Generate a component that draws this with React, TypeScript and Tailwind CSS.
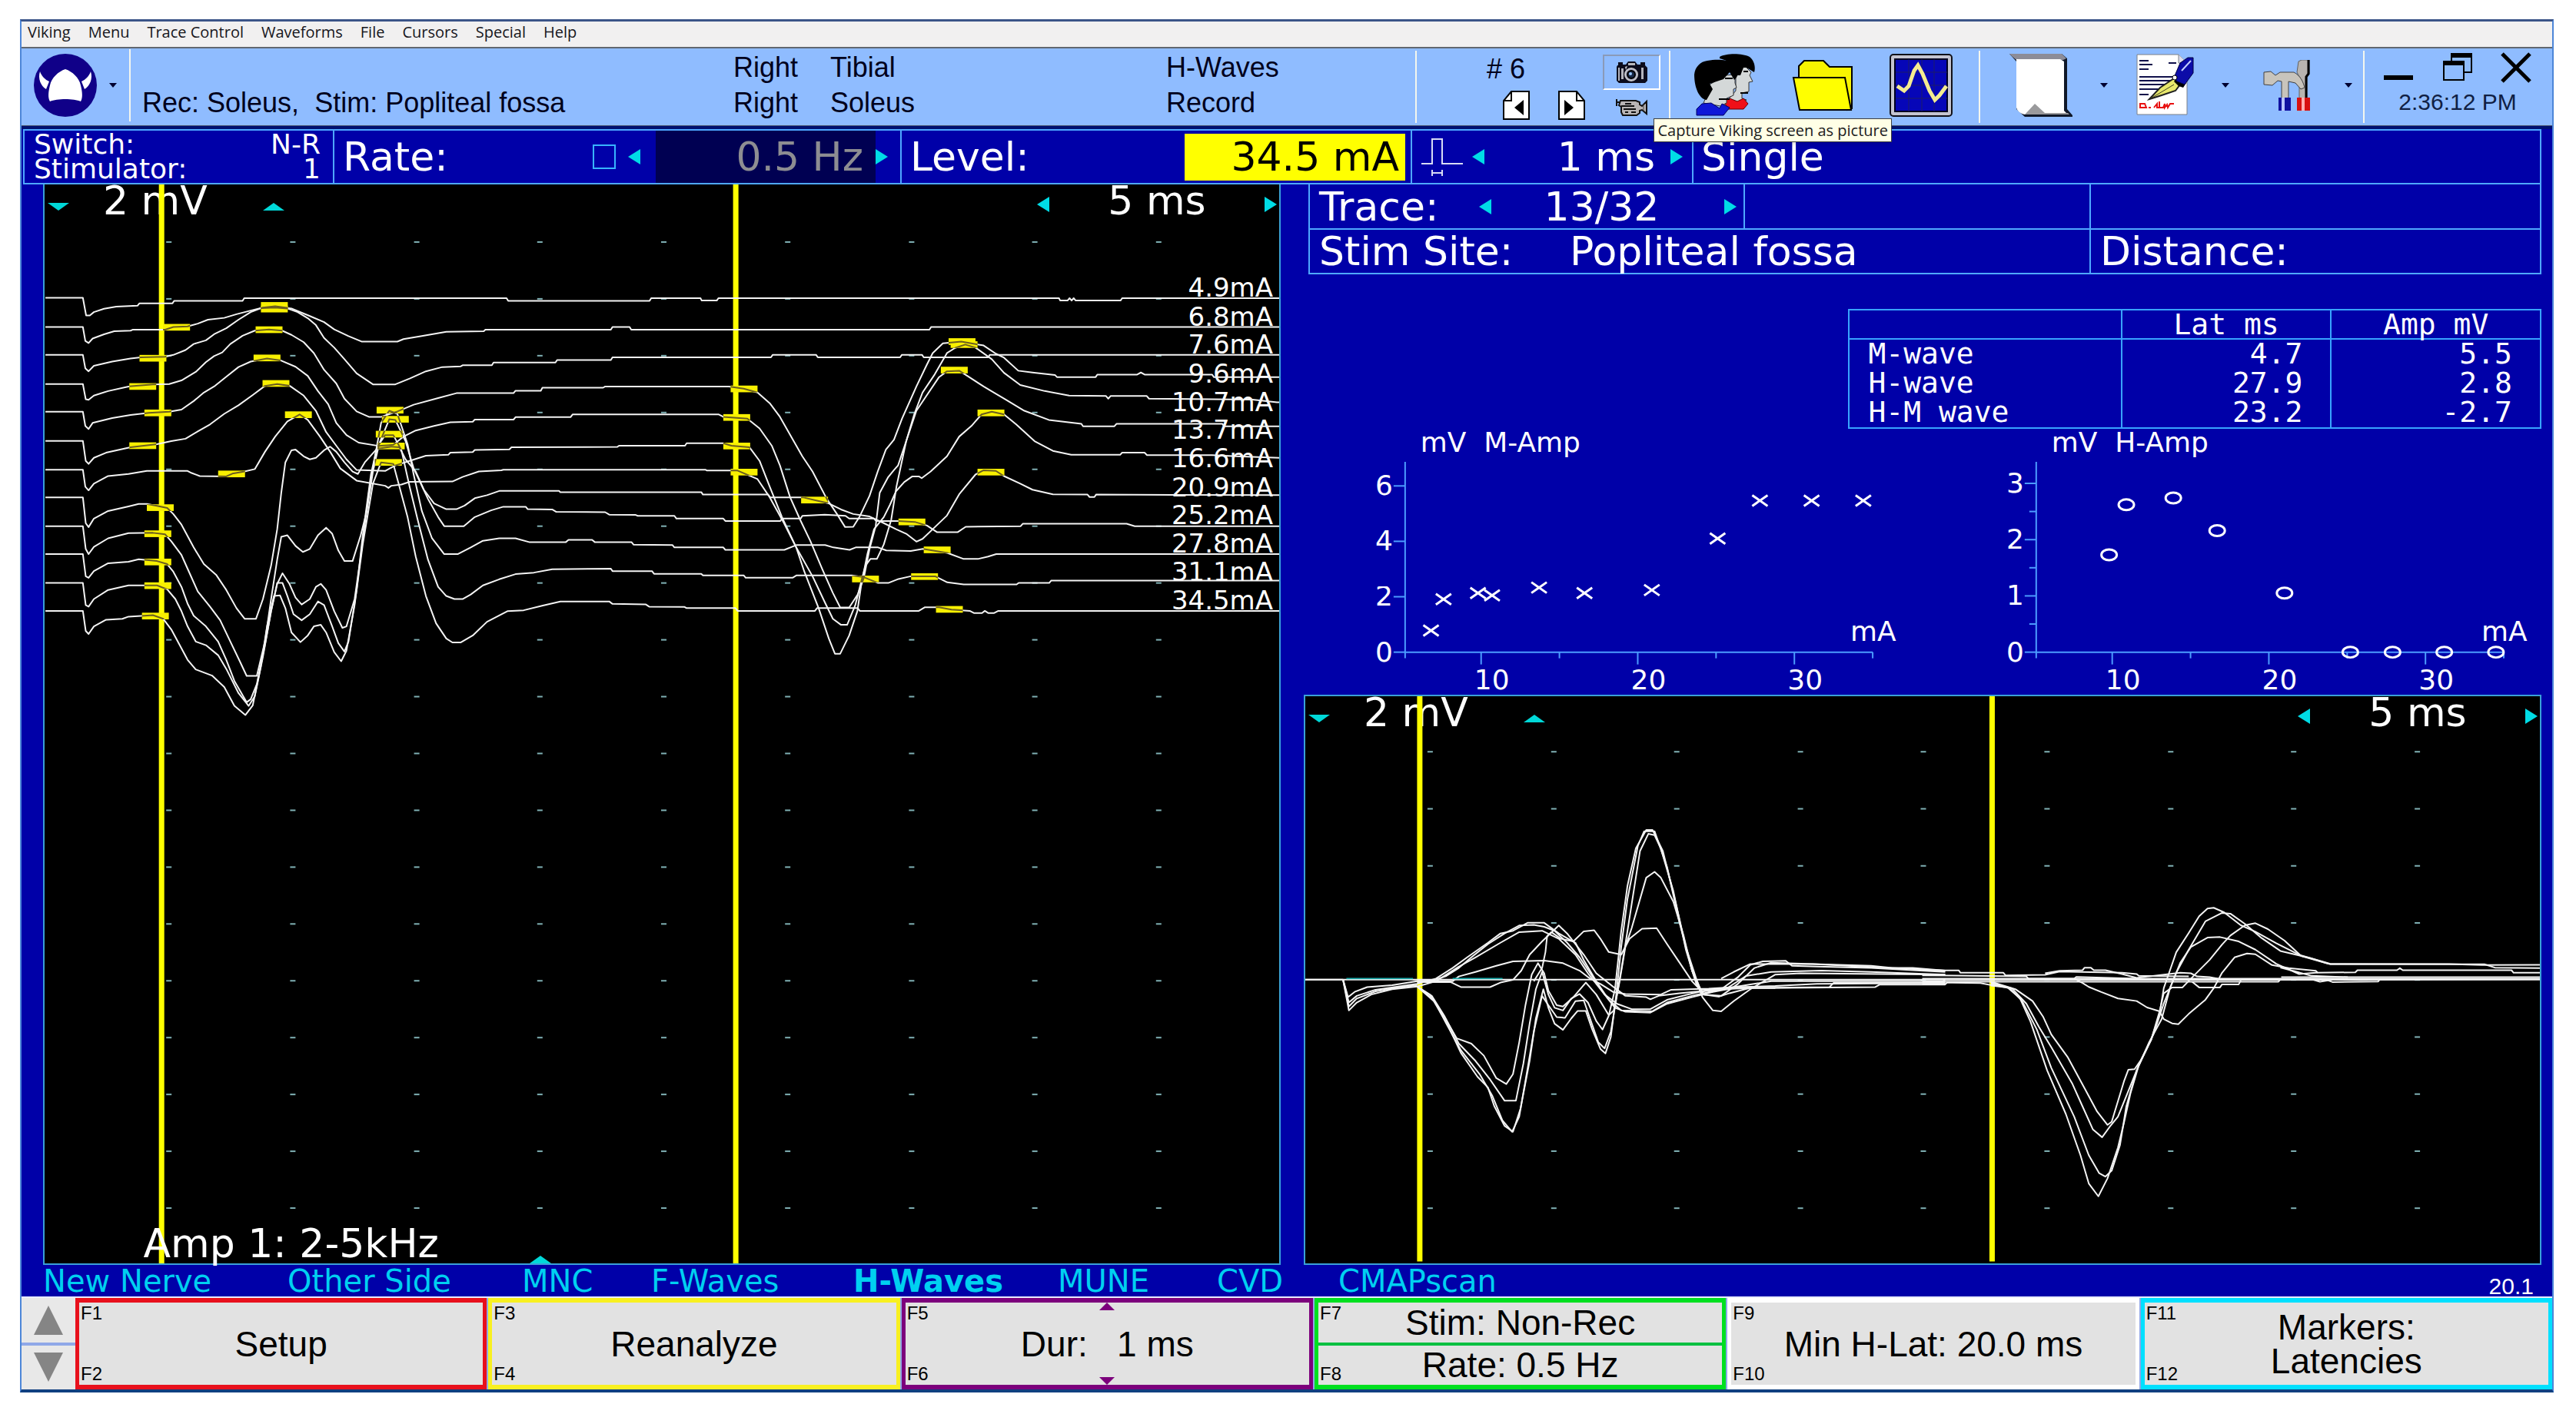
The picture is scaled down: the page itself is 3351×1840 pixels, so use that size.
import React from "react";

const WIDE = "font-['DejaVu_Sans',sans-serif]";

/* ---------- small shared pieces ---------- */

const arrowShapes = {
  left: "M16 0V20L0 10Z",
  right: "M0 0V20L16 10Z",
};

function SideArrow({ dir, label }: { dir: "left" | "right"; label: string }) {
  return (
    <button type="button" aria-label={label} className="block shrink-0">
      <svg viewBox="0 0 16 20" className="block h-5 w-4" fill="#00dce6">
        <path d={arrowShapes[dir]} />
      </svg>
    </button>
  );
}

function VertArrow({ dir, label }: { dir: "up" | "down"; label: string }) {
  return (
    <button type="button" aria-label={label} className="block shrink-0">
      <svg viewBox="0 0 28 10" className="block h-[10px] w-7" fill="#00d8d8">
        <path d={dir === "up" ? "M0 10H28L14 0Z" : "M0 0H28L14 10Z"} />
      </svg>
    </button>
  );
}

function Divider() {
  return <div className="h-[94px] w-[2px] shrink-0 self-center bg-[#f4f6ee]" />;
}

function DropArrow({ label }: { label: string }) {
  return (
    <button type="button" aria-label={label} className="shrink-0">
      <svg viewBox="0 0 10 6" className="block h-[6px] w-[10px]" fill="#000030">
        <path d="M0 0H10L5 6Z" />
      </svg>
    </button>
  );
}

/* ---------- toolbar icons ---------- */

function VikingLogo() {
  return (
    <svg viewBox="0 0 82 82" className="block h-[82px] w-[82px]">
      <circle cx="41" cy="41" r="41" fill="#100088" />
      <path
        d="M41 20C50 23 59 31 61 41C63 49 64 57 61 62C52 58 30 58 21 62C18 57 19 49 21 41C23 31 32 23 41 20Z"
        fill="#fff"
      />
      <path d="M8 23C10 29 15 34 20 36L16 46C9 42 5 32 8 23ZM74 23C72 29 67 34 62 36L66 46C73 42 77 32 74 23Z" fill="#fff" />
    </svg>
  );
}

function CameraIcon() {
  return (
    <svg viewBox="0 0 42 30" className="block h-[30px] w-[42px]">
      <path d="M2 6H3V2H9V5H13L16 1H25L28 5H32V2H38V6L41 9V26L38 29H4L1 26V8Z" fill="#0c0c1c" />
      <path d="M3 9H5V26H3ZM7 10H10V24H7ZM33 9H36V24H33Z" fill="#b4b4bc" />
      <path d="M16 3H25V6H16Z" fill="#b8b8bc" />
      <path d="M12 8L15 7L13 12Z" fill="#c8c8cc" />
      <circle cx="20" cy="18" r="8" fill="#a8a8c4" stroke="#c4c4c8" strokeWidth="2" />
      <circle cx="20" cy="18" r="5" fill="#182848" stroke="#000" strokeWidth="2" />
      <circle cx="19" cy="17" r="2" fill="#9ac8ff" />
    </svg>
  );
}

function VideoIcon() {
  return (
    <svg viewBox="0 0 42 24" className="block h-6 w-[42px]">
      <path d="M6 3H26L31 5V8L34 10L40 4V20L34 15L31 16V19L27 22H9L7 18V11L4 9Z" fill="#b9b5b5" stroke="#111" strokeWidth="2" />
      <path d="M1 1V10M1 5H6" stroke="#111" strokeWidth="2" />
      <path d="M7 10H24M12 7H20M10 14H26M12 18H16M20 18H26" stroke="#111" strokeWidth="2" />
      <path d="M36 8V16" stroke="#444" strokeWidth="1" />
    </svg>
  );
}

function PageIcon({ dir }: { dir: "left" | "right" }) {
  return (
    <svg viewBox="0 0 35 38" className="block h-[38px] w-[35px]">
      {dir === "left" ? (
        <>
          <path d="M11 1H34V37H1V13Z" fill="#fff" stroke="#000" strokeWidth="2" />
          <path d="M11 1V13H1" fill="none" stroke="#000" strokeWidth="2" />
          <path d="M27 12V32L15 22Z" fill="#000" />
        </>
      ) : (
        <>
          <path d="M1 1H24L34 13V37H1Z" fill="#fff" stroke="#000" strokeWidth="2" />
          <path d="M24 1V13H34" fill="none" stroke="#000" strokeWidth="2" />
          <path d="M8 12V32L20 22Z" fill="#000" />
        </>
      )}
    </svg>
  );
}

function PeopleIcon() {
  return (
    <svg viewBox="0 0 82 82" className="block h-[82px] w-[82px]">
      <path d="M52 18L64 14L74 24L72 28L76 36L71 37V49L62 51V58L68 60L60 66L44 60L54 48V30Z" fill="#d4d8d8" stroke="#333" strokeWidth="1" />
      <path d="M33 4C42 -1 62 -1 72 4C78 9 80 17 78 24L68 18H64L60 28H56C56 18 46 9 33 6Z" fill="#000" />
      <path d="M64 23H70M60 51H70" stroke="#000" strokeWidth="2" />
      <path d="M38 61L46 58L56 62L64 58L70 65L64 72H44Z" fill="#f01018" stroke="#600" strokeWidth="1" />
      <path d="M40 28L53 27V38L55 44L51 46V54L42 58V64L34 68L12 64L18 50L20 40Z" fill="#d4d8d8" stroke="#333" strokeWidth="1" />
      <path d="M17 9C38 5 58 11 58 20C58 26 55 32 52 34L46 24L38 33L20 39L24 46L16 60C7 59 0 45 0 27C1 17 8 10 17 9Z" fill="#000" />
      <path d="M40 32H50M32 59H46" stroke="#000" strokeWidth="2" />
      <path d="M3 72L10 65L22 64L33 71L36 65L46 70L38 80H3Z" fill="#1018d8" stroke="#000060" strokeWidth="1" />
    </svg>
  );
}

function FolderIcon() {
  return (
    <svg viewBox="0 0 82 68" className="block h-[68px] w-[82px]">
      <path d="M9 26V9L16 2H41L49 10H78V64L72 66L68 24Z" fill="#f8f400" stroke="#000" strokeWidth="2" />
      <path d="M2 24H69L77 66H10Z" fill="#ffff00" stroke="#000" strokeWidth="2" />
    </svg>
  );
}

function ScopeIcon() {
  return (
    <svg viewBox="0 0 82 82" className="block h-[82px] w-[82px]">
      <rect x="1" y="1" width="80" height="80" rx="4" fill="#c4c4d0" stroke="#101018" strokeWidth="2" />
      <rect x="7" y="7" width="68" height="68" fill="#0606b8" stroke="#000020" strokeWidth="2" />
      <path d="M8 24H75M8 41H75M8 58H75M25 7V75M42 7V75M58 7V75" stroke="#1c1c68" strokeWidth="1" />
      <path d="M10 42L19 48L25 42L32 22L37 15L43 26L52 48L59 60L65 54L74 42" fill="none" stroke="#f4ec90" strokeWidth="5" />
    </svg>
  );
}

function ScrollIcon() {
  return (
    <svg viewBox="0 0 82 82" className="block h-[82px] w-[82px]">
      <path d="M0 0H68L75 6V72L82 80V82H20L9 72V10Z" fill="#101828" />
      <path d="M0 0H68L74 6L70 8H9L4 4Z" fill="#8c8c98" />
      <path d="M9 7H66L71 10V74L76 79H20C14 78 10 74 9 70Z" fill="#fff" />
      <path d="M20 79L33 65L46 77L76 77L78 79Z" fill="#9a9a9c" />
    </svg>
  );
}

function ReportIcon() {
  return (
    <svg viewBox="0 0 76 82" className="block h-[82px] w-[76px]">
      <path d="M2 1H56L67 12V79H2Z" fill="#fff" stroke="#7a8088" strokeWidth="1" />
      <path d="M56 1V12H67" fill="#dde" stroke="#7a8088" strokeWidth="1" />
      <path d="M5 9H17M5 14H22M5 20H17M5 30H48M5 35H46M5 40H38M5 46H30M5 53H17M43 12H53" stroke="#10104a" strokeWidth="2" />
      <path d="M18 59L32 44L50 32L58 40L52 48L34 54Z" fill="#e8e86c" stroke="#202020" strokeWidth="2" />
      <path d="M20 58L50 40" stroke="#404020" strokeWidth="1" />
      <path d="M52 34L66 38L62 44L56 42L50 36Z" fill="#000" />
      <path d="M50 31L58 12L68 5H75V25L64 40L54 36Z" fill="#0c0ca8" stroke="#000040" strokeWidth="1" />
      <path d="M60 22L72 9" stroke="#c4d0ff" strokeWidth="2" />
      <circle cx="51" cy="31" r="3" fill="#fff" stroke="#000" />
      <path d="M6 70V65H12L14 70H5M17 70H20M24 70L28 65V70H31V62V70H36L38 65V70L41 66L42 70L45 65H50" fill="none" stroke="#e81010" strokeWidth="2" />
    </svg>
  );
}

function ToolsIcon() {
  return (
    <svg viewBox="0 0 62 66" className="block h-[66px] w-[62px]">
      <path d="M46 2L50 0H60V18L57 22V50H47V22L44 16Z" fill="#b8b4b0" stroke="#606060" strokeWidth="1" />
      <path d="M59 0V18L56 22V50" fill="none" stroke="#000" strokeWidth="3" />
      <path d="M1 16L10 15L16 20L22 16H40C48 20 52 28 54 36L49 38L42 30L33 28V50H24V28L19 27L12 33L1 32Z" fill="#c8c4bc" stroke="#404040" strokeWidth="1" />
      <rect x="20" y="49" width="16" height="17" fill="#1010a0" />
      <rect x="24" y="49" width="4" height="17" fill="#b8c4ff" />
      <rect x="44" y="49" width="17" height="17" fill="#d81010" />
      <rect x="50" y="49" width="4" height="17" fill="#ffb0b0" />
    </svg>
  );
}

function IconButton({ label, children }: { label: string; children: React.ReactNode }) {
  return (
    <button type="button" aria-label={label} className="block shrink-0">
      {children}
    </button>
  );
}

/* ---------- bars ---------- */

const menus = ["Viking", "Menu", "Trace Control", "Waveforms", "File", "Cursors", "Special", "Help"];

function MenuBar() {
  return (
    <nav className="flex h-[35px] items-start gap-[23px] border-b-2 border-[#60676f] bg-[#f1f0f0] px-2 font-['Open_Sans',sans-serif] text-[20px] leading-[28px] text-[#16161c]">
      {menus.map((m) => (
        <button type="button" key={m}>
          {m}
        </button>
      ))}
    </nav>
  );
}

function ToolBar() {
  return (
    <header className="flex h-[101px] items-stretch border-b-[1px] border-[#4a5570] bg-[#8fbcff] font-['Liberation_Sans',sans-serif] text-[36px] leading-[46px] text-[#00001c]">
      <div className="flex w-[142px] shrink-0 items-center justify-between pb-1 pl-[16px]">
        <IconButton label="Viking">
          <VikingLogo />
        </IconButton>
        <DropArrow label="Viking menu" />
        <Divider />
      </div>
      <div className="flex flex-1 items-end pb-[6px]">
        <p className="w-[784px] pl-[15px] whitespace-pre">Rec: Soleus,{"  "}Stim: Popliteal fossa</p>
        <p className="w-[126px]">
          Right
          <br />
          Right
        </p>
        <p className="w-[437px]">
          Tibial
          <br />
          Soleus
        </p>
        <p>
          H-Waves
          <br />
          Record
        </p>
      </div>
      <Divider />
      <div className="flex w-[328px] shrink-0 items-center justify-end gap-[23px] pr-[11px] pb-1">
        <div className="flex w-[128px] flex-col gap-[5px]">
          <span>#&nbsp;6</span>
          <div className="flex gap-[37px] self-end">
            <IconButton label="Previous page">
              <PageIcon dir="left" />
            </IconButton>
            <IconButton label="Next page">
              <PageIcon dir="right" />
            </IconButton>
          </div>
        </div>
        <div className="flex flex-col items-center gap-[11px]">
          <button
            type="button"
            aria-label="Capture Viking screen as picture"
            className="flex h-[46px] w-[75px] items-center justify-center border-2 border-t-[#8a9ab8] border-r-white border-b-white border-l-[#8a9ab8]"
          >
            <CameraIcon />
          </button>
          <IconButton label="Capture video">
            <VideoIcon />
          </IconButton>
        </div>
      </div>
      <Divider />
      <div className="flex w-[401px] shrink-0 items-center justify-between pr-[34px] pb-1 pl-[31px]">
        <IconButton label="Patients">
          <PeopleIcon />
        </IconButton>
        <IconButton label="Open folder">
          <FolderIcon />
        </IconButton>
        <IconButton label="Waveform view">
          <ScopeIcon />
        </IconButton>
      </div>
      <Divider />
      <div className="flex w-[498px] shrink-0 items-center gap-9 pb-1 pl-[38px]">
        <IconButton label="Print">
          <ScrollIcon />
        </IconButton>
        <DropArrow label="Print options" />
        <IconButton label="Report">
          <ReportIcon />
        </IconButton>
        <DropArrow label="Report options" />
        <div className="flex items-center gap-11 pl-2">
          <IconButton label="Tools">
            <ToolsIcon />
          </IconButton>
          <DropArrow label="Tools options" />
        </div>
      </div>
      <Divider />
      <div className="flex w-[244px] shrink-0 flex-col gap-[5px] pt-[5px] pr-[27px] pl-[25px]">
        <div className="flex justify-between">
          <IconButton label="Minimize">
            <svg viewBox="0 0 40 40" className="block size-10">
              <path d="M0 30H38V36H0Z" />
            </svg>
          </IconButton>
          <IconButton label="Restore">
            <svg viewBox="0 0 40 40" className="block size-10" fill="none" stroke="#000" strokeWidth="2">
              <path d="M12 12V2H38V26H28" />
              <path d="M12 4H38" strokeWidth="6" />
              <path d="M2 12H28V36H2Z" />
              <path d="M2 14H28" strokeWidth="6" />
            </svg>
          </IconButton>
          <IconButton label="Close">
            <svg viewBox="0 0 40 40" className="block size-10" fill="none" stroke="#000" strokeWidth="5">
              <path d="M2 2L38 38M38 2L2 38" />
            </svg>
          </IconButton>
        </div>
        <time className="self-center text-[30px] leading-[40px] text-[#102044]">2:36:12 PM</time>
      </div>
      <div
        role="tooltip"
        className="absolute top-[126px] right-[859px] z-10 flex h-[31px] items-center border border-[#404040] bg-[#ffffe6] px-1 font-['Open_Sans',sans-serif] text-[20px] leading-[24px] whitespace-nowrap text-[#202020] shadow-md"
      >
        Capture Viking screen as picture
      </div>
    </header>
  );
}

function StimBar() {
  return (
    <section
      className={`ml-[2px] mr-[14px] flex h-[72px] border-2 border-[#4fa8ff] ${WIDE} text-[52px] leading-[64px] text-white`}
    >
      <dl className="grid w-[401px] shrink-0 grid-cols-[1fr_auto] content-center pr-4 pl-3 text-[36px] leading-[32px]">
        <dt>Switch:</dt>
        <dd className="text-right">N-R</dd>
        <dt>Stimulator:</dt>
        <dd className="text-right">1</dd>
      </dl>
      <div className="flex w-[738px] shrink-0 items-center border-l-2 border-[#4fa8ff] pl-[11px]">
        <label htmlFor="rate-on" className="flex-1">
          Rate:
        </label>
        <input id="rate-on" type="checkbox" className="mr-4 h-8 w-[30px] appearance-none border-2 border-[#38b4ff]" />
        <SideArrow dir="left" label="Lower rate" />
        <span className="ml-5 flex h-full w-[286px] items-center justify-end bg-[#000052] pr-4 text-[#8d8d92]">
          0.5 Hz
        </span>
        <div className="pr-4">
          <SideArrow dir="right" label="Raise rate" />
        </div>
      </div>
      <div className="flex w-[664px] shrink-0 items-center border-l-2 border-[#4fa8ff] pr-[7px] pl-[11px]">
        <span className="flex-1">Level:</span>
        <output className="flex h-[61px] w-[287px] items-center justify-end bg-[#ffff00] pr-2 text-black">34.5 mA</output>
      </div>
      <div className="flex w-[366px] shrink-0 items-center border-l-2 border-[#4fa8ff] pr-3 pl-[12px]">
        <svg viewBox="0 0 54 52" className="mr-3 block h-[52px] w-[54px]" fill="none" stroke="#d8dcf4" strokeWidth="2">
          <path d="M0 35H14V3H27V35H54M14 43V51M27 43V51M14 47H27" />
        </svg>
        <SideArrow dir="left" label="Shorter pulse" />
        <span className="flex-1 pr-5 text-right">1 ms</span>
        <SideArrow dir="right" label="Longer pulse" />
      </div>
      <div className="flex flex-1 items-center border-l-2 border-[#4fa8ff] pl-[10px]">Single</div>
    </section>
  );
}

/* ---------- waveform data ---------- */

// Stimulus level and sampled polyline for each stored trace.
const traces: { level: string; top: string; pts: string }[] = [
  {
    level: "4.9mA",
    top: "top-[9.1%]",
    pts: "36,118 128,118 136,176 145,176 155,165 180,154 210,147 262,144 267,136 348,136 352,128 520,128 524,119 1168,119 1172,128 1519,128 1523,119 1644,119 1647,127 1684,127 1688,119 2524,119 2527,127 2545,127 2550,119 2555,127 2560,119 2565,127 2675,127 2679,119 3070,119",
  },
  {
    level: "6.8mA",
    top: "top-[11.8%]",
    pts: "36,214 128,214 134,260 142,267 152,252 180,238 205,228 245,226 250,223 330,223 350,214 385,212 410,203 435,190 475,184 505,172 540,160 570,150 600,146 640,153 685,178 720,198 745,222 780,244 812,262 900,262 915,254 960,244 1020,230 1112,228 1116,223 1424,223 1428,214 1470,214 1474,223 2206,223 2210,214 3070,214",
  },
  {
    level: "7.6mA",
    top: "top-[14.4%]",
    pts: "36,306 128,306 134,350 142,360 155,342 200,328 245,318 270,314 330,312 350,306 380,290 400,270 430,258 450,238 480,218 510,190 540,165 565,152 600,150 630,153 655,165 680,185 700,208 720,250 745,282 770,320 800,367 840,403 895,403 930,384 970,360 1010,346 1055,344 1060,340 1132,340 1136,331 1288,331 1292,323 1424,323 1428,314 1817,314 1821,306 1928,306 1932,314 2134,314 2138,306 2188,306 2192,314 2350,314 2354,306 3070,306",
  },
  {
    level: "9.6mA",
    top: "top-[17.1%]",
    pts: "36,402 128,402 135,452 142,454 155,440 190,425 240,410 300,403 340,402 370,390 405,362 430,330 450,310 470,298 490,270 520,243 550,226 585,222 617,226 640,240 670,264 695,300 720,355 750,400 770,450 800,492 830,510 860,510 900,492 940,470 1000,448 1045,432 1185,432 1190,424 1252,424 1256,414 1405,414 1410,410 1714,410 1750,417 1784,430 1814,465 1839,510 1894,640 1919,690 1954,780 1979,830 1999,873 2019,872 2034,840 2059,770 2079,690 2099,618 2119,585 2139,515 2174,410 2199,340 2214,300 2239,268 2284,262 2339,275 2369,302 2389,315 2424,358 2459,364 2514,372 2519,379 2614,379 2618,371 2715,371 2725,364 2735,371 2900,371 2904,379 3070,379",
  },
  {
    level: "10.7mA",
    top: "top-[19.7%]",
    pts: "36,493 128,493 134,540 142,550 152,530 200,514 245,504 290,497 340,493 370,486 400,458 425,430 450,410 480,378 510,346 540,328 580,318 613,324 650,345 680,375 705,425 730,468 750,530 775,570 805,595 855,606 890,602 915,575 945,555 990,540 1030,528 1085,526 1090,519 1185,519 1190,511 1325,511 1330,502 1689,502 1700,510 1759,516 1789,548 1819,605 1839,670 1864,775 1889,850 1914,920 1944,1015 1969,1090 1987,1138 2009,1138 2030,1095 2045,1040 2059,945 2074,870 2084,760 2104,710 2119,685 2129,670 2149,590 2169,500 2189,430 2219,370 2249,300 2269,283 2294,272 2319,282 2359,320 2389,365 2429,405 2489,425 2549,440 2639,441 2645,450 2651,441 2739,441 2745,450 2999,453 3059,462 3070,462",
  },
  {
    level: "13.7mA",
    top: "top-[22.3%]",
    pts: "36,589 128,589 135,655 142,665 155,645 185,628 245,610 310,600 345,590 380,582 410,558 440,535 475,500 510,472 545,438 575,408 605,402 636,408 670,440 700,490 725,560 750,605 775,650 800,685 870,688 895,670 930,655 970,638 1025,635 1030,628 1085,626 1090,619 1175,617 1180,610 1440,609 1444,605 1606,605 1610,597 1700,597 1720,605 1764,610 1789,655 1814,740 1844,840 1879,940 1919,1035 1949,1120 1969,1175 1989,1195 2004,1195 2024,1130 2039,1050 2049,1000 2061,978 2077,978 2094,930 2112,850 2125,740 2149,590 2174,490 2199,440 2229,380 2249,360 2279,358 2299,375 2339,410 2389,450 2439,490 2499,520 2579,533 2583,541 2660,541 2665,533 2925,533 2929,541 3070,541",
  },
  {
    level: "16.6mA",
    top: "top-[24.9%]",
    pts: "36,684 128,684 134,740 142,752 155,730 190,705 240,698 285,688 385,688 395,695 415,705 480,706 495,697 525,690 550,682 575,625 600,575 630,525 660,502 680,520 710,575 735,625 760,680 800,720 870,737 878,744 885,737 910,733 930,724 1035,723 1060,708 1100,690 1155,686 1160,684 1656,684 1660,687 1735,687 1784,715 1814,775 1849,860 1879,940 1899,1020 1934,1140 1959,1240 1974,1290 1987,1290 2009,1230 2029,1150 2039,1060 2054,960 2070,880 2094,840 2109,800 2124,755 2144,725 2164,706 2180,706 2187,712 2209,690 2249,640 2279,575 2309,540 2334,502 2359,493 2389,502 2419,535 2464,590 2509,622 2554,635 2674,635 2679,628 2734,628 2740,636 2900,636 2960,640 3070,645",
  },
  {
    level: "20.9mA",
    top: "top-[27.6%]",
    pts: "36,775 128,775 135,860 142,873 155,845 190,820 240,805 265,797 285,797 310,803 335,810 350,830 370,865 400,940 425,995 455,1030 480,1080 505,1140 525,1175 553,1175 570,1110 590,1000 605,880 615,760 625,660 640,620 650,618 670,640 685,650 700,645 720,620 735,608 750,625 770,660 790,690 803,698 820,660 850,615 885,608 905,610 920,650 945,690 965,750 990,795 1020,814 1045,814 1065,802 1090,778 1120,768 1150,754 1297,754 1300,758 1646,758 1650,766 1810,766 1815,775 1895,775 1924,784 1959,795 1989,815 2019,830 2059,838 2094,860 2124,880 2149,895 2174,921 2189,912 2214,880 2249,835 2279,765 2319,700 2339,686 2369,688 2389,705 2429,730 2459,750 2509,765 2594,766 2599,774 2611,774 2615,766 3070,768",
  },
  {
    level: "25.2mA",
    top: "top-[30.2%]",
    pts: "36,870 128,870 135,945 142,962 155,938 190,910 240,893 300,892 330,897 345,920 370,965 385,1010 410,1085 440,1135 465,1180 490,1250 515,1320 530,1363 555,1363 575,1250 590,1110 605,980 615,905 630,900 650,935 668,955 685,945 705,900 725,875 740,895 755,950 770,985 790,985 810,900 825,820 840,690 855,600 880,518 895,520 920,590 940,680 975,780 1000,840 1015,870 1063,870 1090,840 1130,818 1160,806 1215,806 1220,814 1280,815 1290,823 1410,824 1420,832 1485,833 1490,836 1580,836 1585,845 1700,845 1705,853 1840,853 1844,845 1890,845 1894,836 1949,832 2000,836 2009,845 2070,845 2075,853 2129,853 2170,856 2200,868 2225,890 2275,890 2295,872 2430,870 2435,862 2690,862 2710,870 3070,870",
  },
  {
    level: "27.8mA",
    top: "top-[32.8%]",
    pts: "36,962 128,962 135,1035 142,1040 155,1018 190,992 240,987 265,979 310,985 335,995 350,1020 370,1070 385,1125 400,1165 430,1200 460,1250 480,1310 500,1380 530,1450 540,1440 555,1390 575,1260 590,1150 605,1060 618,1025 635,1060 650,1105 665,1128 685,1110 700,1070 712,1060 725,1080 745,1150 765,1205 775,1200 795,1110 810,970 830,760 845,640 860,530 880,490 900,500 925,600 940,700 960,820 985,910 1015,962 1048,962 1080,940 1110,918 1150,910 1190,910 1225,923 1313,923 1320,915 1378,915 1385,923 1475,923 1480,931 1575,932 1580,940 1700,940 1705,948 1850,948 1880,932 1950,932 1970,940 2010,948 2025,940 2080,940 2100,950 2160,952 2190,945 2250,958 2290,978 2325,978 2350,970 2370,962 3070,962",
  },
  {
    level: "31.1mA",
    top: "top-[35.5%]",
    pts: "36,1057 128,1057 135,1130 142,1135 155,1110 190,1080 240,1065 310,1065 335,1078 355,1110 370,1150 385,1200 405,1250 430,1262 460,1295 480,1340 510,1420 535,1462 550,1430 570,1300 590,1150 605,1057 618,1057 630,1100 645,1160 665,1180 685,1160 705,1118 720,1130 740,1200 755,1255 770,1283 780,1250 800,1080 815,900 835,700 850,610 870,570 890,570 910,620 930,740 950,850 975,980 1000,1070 1020,1100 1040,1110 1060,1110 1080,1095 1110,1065 1150,1045 1190,1028 1235,1023 1280,1012 1424,1010 1428,1018 1525,1018 1530,1027 1646,1027 1650,1032 1750,1032 1755,1040 1870,1040 1880,1032 2015,1032 2045,1038 2080,1057 2105,1057 2130,1044 2160,1035 2220,1035 2250,1055 2290,1062 2420,1062 2425,1057 2500,1057 2505,1049 3070,1049",
  },
  {
    level: "34.5mA",
    top: "top-[38.1%]",
    pts: "36,1149 128,1149 135,1215 142,1225 155,1200 185,1178 225,1175 240,1168 300,1163 325,1175 345,1210 365,1260 385,1310 405,1342 445,1362 475,1400 500,1462 527,1492 545,1460 565,1330 580,1200 597,1100 612,1098 625,1140 640,1220 662,1252 680,1230 695,1200 712,1195 725,1220 745,1285 762,1315 775,1280 795,1130 815,930 840,730 860,660 890,665 905,740 925,840 945,970 970,1100 995,1190 1020,1240 1035,1253 1055,1253 1085,1230 1120,1185 1170,1150 1210,1147 1255,1132 1300,1118 1420,1118 1428,1126 1510,1128 1518,1135 1605,1136 1610,1140 1730,1140 1735,1149 1925,1149 1930,1140 2030,1140 2035,1149 2180,1149 2195,1137 2230,1137 2260,1145 2305,1149 2315,1156 2335,1156 2342,1149 2350,1156 2365,1156 2375,1149 3070,1149",
  },
];

// Centres of the latency and peak markers.
const markers: [number, number][] = [
  [598, 143], [598, 155], [358, 215], [585, 223], [300, 317], [580, 316], [275, 410], [602, 400],
  [312, 497], [657, 503], [275, 605], [493, 698], [318, 809], [312, 895], [312, 988], [312, 1066],
  [306, 1166], [882, 488], [895, 518], [880, 567], [885, 606], [878, 660], [1751, 418], [1733, 512],
  [1733, 606], [1751, 692], [1924, 784], [2163, 856], [2225, 948], [2049, 1044], [2194, 1036],
  [2255, 1144], [2286, 262], [2291, 272], [2267, 356], [2357, 497], [2357, 692],
];

const overlayEarly = [
  "30,684 1568,684",
  "30,684 122,684 134,750 150,730 180,712 240,705 300,690 340,686 370,670 400,640 430,600 470,550 510,510 545,480 580,478 605,485 630,500 660,545 690,600 720,670 750,740 780,775 815,795 860,795 900,760 950,740 1000,722 1060,712 1160,708 1260,700 1568,697",
  "122,684 136,770 155,745 200,722 300,700 345,680 385,640 420,600 470,545 500,510 530,500 565,470 605,470 640,510 680,545 700,610 730,690 760,760 790,800 865,803 900,770 960,745 1030,720 1100,716 1400,712 1410,703 1568,703",
  "122,684 136,800 155,770 190,740 240,720 300,710 345,690 400,635 440,600 500,545 545,505 600,500 640,530 680,590 710,660 740,720 775,790 800,805 860,808 900,775 960,750 1010,730 1060,716 1290,712 1300,696 1568,696",
  "122,684 136,785 155,755 200,728 250,714 300,705",
  "300,690 385,690 400,672 440,655 490,632 530,615 605,612 650,622 690,650 715,680 740,700 770,730 800,738 885,740 910,722 1000,718 1060,712 1150,690 1568,690",
  "300,693 380,693 405,712 475,712 500,695 530,685 550,650 570,590 600,540 640,480 660,510 700,590 730,660 770,710 800,745 850,750 860,758 880,745 930,735 1060,716",
  "580,690 600,640 608,580 612,520 622,505 645,530 675,540 700,502 725,498 740,530 760,580 790,590 810,530 840,492 875,490 900,550 930,620 960,690 990,740 1025,748 1050,735 1100,715 1160,716",
  "300,710 330,740 360,810 395,905 430,925 460,970 490,1055 514,1077 530,1040 545,920 560,780 575,665 590,622 605,660 615,725 635,780 650,785 675,750 705,695 730,740 760,818 772,800 785,700 800,560 815,490 850,300 870,278 885,300 915,390 940,520 960,650 985,750 1010,800 1030,803 1060,765 1100,720 1160,665 1220,660 1568,665",
  "300,710 335,745 365,820 400,925 440,990 475,1060 510,1140 537,1140 555,1000 570,850 585,720 600,655 615,740 630,790 650,800 670,755 690,738 710,770 730,840 745,872 760,820 775,720 790,500 805,330 825,190 850,120 865,120 890,200 920,390 945,560 970,680 985,740 1030,745 1070,700 1110,640 1150,620 1250,625 1390,632 1440,640 1490,640 1568,650",
  "300,710 340,760 370,850 405,950 450,1040 480,1120 505,1215 528,1257 545,1200 565,1020 580,880 600,745 615,780 635,825 655,828 680,765 700,762 715,830 735,920 750,943 765,880 780,740 795,600 815,400 835,200 855,135 870,140 885,190 915,350 945,570 970,700 985,728 1030,720 1070,675 1100,628 1130,615 1185,613 1200,632 1260,635 1390,640 1568,655",
  "300,710 340,765 375,860 405,960 445,1050 470,1090 485,1160 510,1235 530,1257 548,1170 570,990 585,830 603,720 615,790 630,850 650,873 670,830 685,802 705,802 720,870 740,945 752,962 765,900 778,740 790,560 805,380 830,180 845,125 870,125 900,260 930,470 960,650 980,720 1040,720 1090,670 1150,655 1270,650 1390,655 1568,665",
  "1030,680 1060,655 1100,625 1250,625 1390,636 1568,650",
];

const overlayLate = [
  "0,403 1487,403",
  "50,408 1487,407",
  "0,415 855,415 862,403",
  "0,371 88,371 92,380 195,380 200,390 295,388 330,375 480,380 515,385 520,392 640,394",
  "295,382 330,372 385,370 390,360 405,360 412,370 440,370 480,385 515,400 540,395 620,380 645,382 660,394 690,397 710,403",
  "0,390 250,394 255,403 365,403 370,396 515,403",
  "0,425 55,425 60,418 140,420 165,428",
  "165,430 205,437 235,480 260,570 300,760 345,930 380,1090 400,1200 423,1250 445,1180 470,1060 485,960 500,850 520,740 550,640 570,540 580,440 595,370 610,300 640,225 665,160 685,130 700,127 725,145 765,195 800,220 850,265 905,310 980,345 1265,346 1345,350 1487,349",
  "165,425 210,440 240,490 275,600 310,750 365,940 400,1090 425,1160 440,1173 455,1150 475,1050 490,900 515,760 545,650 575,560 595,440 610,380 640,290 680,180 720,147 740,150 775,190 815,245 860,295 930,322 980,347 1350,347 1375,360 1487,362",
  "165,420 215,440 250,500 280,590 310,670 360,810 385,900 410,990 432,1020 450,980 470,940 490,860 520,740 555,620 580,500 600,420 620,340 645,280 685,243 715,241 760,258 800,290 850,345 905,385 945,380 1040,378 1045,370 1140,370 1147,362 1154,370 1415,370 1420,380 1487,380",
  "165,415 225,445 265,490 290,550 310,620 350,710 390,830 420,920 445,972 455,960 470,880 485,800 495,757 510,755 525,720 550,640 570,530 580,460 600,437 625,437 650,395 690,330 720,270 740,235 775,195 800,187 830,210 870,255 910,315 975,345",
  "365,403 385,420 400,435 430,455 470,480 515,490 540,515 570,530 580,560 600,577 615,580 640,540 680,485 700,440 720,380 750,320 780,305 800,308 840,350 880,362 945,372 950,380",
  "648,415 665,437 715,437 720,425 760,425 765,410",
  "862,397 1487,397",
  "930,403 955,415 975,410 985,416 1095,414 1100,403",
  "860,360 890,372 935,392 1022,397",
];

function Grid({ xs, ys }: { xs: number[]; ys: number[] }) {
  return (
    <g fill="#7fb0b4">
      {ys.flatMap((y) => xs.map((x) => <rect key={`${x}-${y}`} x={x - 3} y={y - 1} width="7" height="2" />))}
    </g>
  );
}

function Lines({ items, color }: { items: string[]; color: string }) {
  return (
    <>
      {items.map((pts) => (
        <polyline
          key={pts}
          points={pts}
          fill="none"
          stroke={color}
          strokeWidth="2"
          strokeLinejoin="round"
          vectorEffect="non-scaling-stroke"
        />
      ))}
    </>
  );
}

function steps(start: number, gap: number, count: number) {
  return Array.from({ length: count }, (_, i) => Math.round(start + i * gap));
}

function Scales() {
  return (
    <div className="absolute inset-x-0 top-0 flex h-[52px] items-start justify-between text-[52px] leading-[42px] text-white">
      <div className="flex h-full items-start">
        <div className="mt-[24px] ml-[4px]">
          <VertArrow dir="down" label="Lower gain" />
        </div>
        <span className="mr-[46px] ml-[44px] w-[162px]">2 mV</span>
        <div className="mt-[24px]">
          <VertArrow dir="up" label="Raise gain" />
        </div>
      </div>
      <div className="flex h-full items-start">
        <div className="mt-[16px]">
          <SideArrow dir="left" label="Shorter sweep" />
        </div>
        <span className="mr-[66px] ml-[66px] w-[148px] text-center">5 ms</span>
        <div className="mt-[16px] mr-[3px]">
          <SideArrow dir="right" label="Longer sweep" />
        </div>
      </div>
    </div>
  );
}

function TracePlot() {
  const lines = traces.map((t) => t.pts);
  return (
    <section className={`relative min-h-0 border-2 border-t-0 border-[#3aa0d8] bg-black ${WIDE}`}>
      <Scales />
      {traces.map((t) => (
        <span key={t.level} className={`absolute right-2 ${t.top} -mt-[10px] text-[34px] leading-[32px] text-white`}>
          {t.level}
        </span>
      ))}
      <svg viewBox="58 239 1604 1405" preserveAspectRatio="none" className="absolute inset-0 h-full w-full">
        <clipPath id="marker-area">
          {markers.map(([x, y]) => (
            <rect key={`${x}-${y}`} x={x - 33} y={y - 11} width="66" height="22" />
          ))}
        </clipPath>
        <Grid xs={steps(219, 160.75, 9)} ys={steps(314, 74, 18)} />
        <path d="M210 239V1646M956 239V1646" stroke="#ffff00" strokeWidth="7" />
        <g transform="translate(40 340) scale(0.5293 0.3954)">
          <Lines items={lines} color="#f4f4f4" />
          {markers.map(([x, y]) => (
            <rect key={`${x}-${y}`} x={x - 33} y={y - 11} width="66" height="22" fill="#f8f000" />
          ))}
          <g clipPath="url(#marker-area)">
            <Lines items={lines} color="#6a5c20" />
          </g>
        </g>
      </svg>
      <p className="absolute bottom-0 left-[8%] text-[52px] leading-[52px] text-white">Amp 1: 2-5kHz</p>
      <div className="absolute bottom-0 left-[39.3%]">
        <VertArrow dir="up" label="Sweep position" />
      </div>
    </section>
  );
}

function OverlayPlot() {
  return (
    <section className={`relative min-h-0 flex-1 border-2 border-[#3aa0d8] bg-black ${WIDE}`}>
      <Scales />
      <svg viewBox="1697 908 1607 736" preserveAspectRatio="none" className="absolute inset-0 h-full w-full">
        <Grid xs={steps(1859, 160.6, 9)} ys={steps(980, 74, 9)} />
        <path d="M1846 908V1641M2591 908V1641" stroke="#ffff00" strokeWidth="7" />
        <g transform="translate(1680 1040) scale(0.5421 0.3444)">
          <Lines items={overlayEarly} color="#f4f4f4" />
          <path d="M130 680H290M385 680H505" stroke="#18a8a8" strokeWidth="5" />
        </g>
        <g transform="translate(2500 1140) scale(0.5421 0.3333)">
          <Lines items={overlayLate} color="#f4f4f4" />
        </g>
      </svg>
    </section>
  );
}

/* ---------- right-hand readouts ---------- */

function TraceReadout() {
  return (
    <div className={`ml-[6px] text-[52px] leading-[54px] text-white ${WIDE}`}>
      <div className="flex h-[59px] items-stretch border-2 border-t-0 border-[#4fa8ff]">
        <div className="flex w-[564px] items-center pr-[9px] pl-[12px]">
          <span className="w-[208px]">Trace:</span>
          <SideArrow dir="left" label="Previous trace" />
          <span className="flex-1 pr-4 text-center">13/32</span>
          <SideArrow dir="right" label="Next trace" />
        </div>
        <div className="w-[450px] border-l-2 border-[#4fa8ff]" />
        <div className="flex-1 border-l-2 border-[#4fa8ff]" />
      </div>
      <div className="flex h-[58px] items-stretch border-2 border-t-0 border-[#4fa8ff]">
        <div className="flex w-[1014px] items-center pl-[12px]">
          <span className="w-[326px]">Stim Site:</span>
          <span>Popliteal fossa</span>
        </div>
        <div className="flex flex-1 items-center border-l-2 border-[#4fa8ff] pl-[12px]">Distance:</div>
      </div>
    </div>
  );
}

const waves = [
  ["M-wave", "4.7", "5.5"],
  ["H-wave", "27.9", "2.8"],
  ["H-M wave", "23.2", "-2.7"],
];

function WaveTable() {
  return (
    <table className="mt-[45px] ml-auto w-[56%] table-fixed border-collapse border-2 border-[#38a4ff] font-['DejaVu_Sans_Mono',monospace] text-[38px] leading-[36px] text-white">
      <colgroup>
        <col className="w-[39.4%]" />
        <col className="w-[30.3%]" />
        <col className="w-[30.3%]" />
      </colgroup>
      <thead>
        <tr className="border-b-2 border-[#38a4ff]">
          <td />
          <th scope="col" className="border-l-2 border-[#38a4ff] text-center font-normal">
            Lat ms
          </th>
          <th scope="col" className="border-l-2 border-[#38a4ff] text-center font-normal">
            Amp mV
          </th>
        </tr>
      </thead>
      <tbody>
        {waves.map(([name, lat, amp]) => (
          <tr key={name}>
            <th scope="row" className="pb-[2px] pl-6 text-left font-normal">
              {name}
            </th>
            <td className="border-l-2 border-[#38a4ff] pb-[2px] pr-9 text-right">{lat}</td>
            <td className="border-l-2 border-[#38a4ff] pb-[2px] pr-9 text-right">{amp}</td>
          </tr>
        ))}
      </tbody>
    </table>
  );
}

type ChartProps = {
  title: string;
  axisX: number;
  unit: number;
  labels: number[];
  minor: number[];
  mark: "x" | "o";
  points: [number, number][];
};

function AmpChart({ title, axisX, unit, labels, minor, mark, points }: ChartProps) {
  const base = 291;
  const px = (mA: number) => axisX - 3 + (mA - 5) * 20.4;
  const py = (mV: number) => base - mV * unit;
  return (
    <svg
      viewBox="0 0 803 346"
      className="block h-auto w-1/2 overflow-visible font-['DejaVu_Sans',sans-serif] text-[36px]"
      fill="#fff"
    >
      <text x={axisX + 20} y="30" xmlSpace="preserve">
        {title}
      </text>
      <g stroke="#4c9cff" strokeWidth="2">
        <path d={`M${axisX} 43V299M${axisX} ${base}H${axisX + 609}`} fill="none" />
        {labels.map((v) => (
          <path key={v} d={`M${axisX - 15} ${py(v)}H${axisX}`} />
        ))}
        {minor.map((v) => (
          <path key={v} d={`M${axisX - 9} ${py(v)}H${axisX}`} />
        ))}
        {[10, 20, 30].map((v) => (
          <path key={v} d={`M${px(v)} ${base}V307`} />
        ))}
        {[15, 25, 35].map((v) => (
          <path key={v} d={`M${px(v)} ${base}V299`} />
        ))}
      </g>
      {labels.map((v) => (
        <text key={v} x={axisX - 16} y={py(v) + 12} textAnchor="end">
          {v}
        </text>
      ))}
      {[10, 20, 30].map((v) => (
        <text key={v} x={px(v) + 14} y="339" textAnchor="middle">
          {v}
        </text>
      ))}
      <text x={axisX + 580} y="276">
        mA
      </text>
      <g fill="none" stroke="#fff" strokeWidth="3">
        {points.map(([a, v]) =>
          mark === "x" ? (
            <path key={a} d={`M${px(a) - 10} ${py(v) - 7}l20 14m0 -14l-20 14`} />
          ) : (
            <ellipse key={a} cx={px(a)} cy={py(v)} rx="10" ry="7" />
          ),
        )}
      </g>
    </svg>
  );
}

/* ---------- bottom ---------- */

const tabs = [
  ["New Nerve", "w-[318px]"],
  ["Other Side", "w-[305px]"],
  ["MNC", "w-[168px]"],
  ["F-Waves", "w-[263px]"],
  ["H-Waves", "w-[266px] font-bold"],
  ["MUNE", "w-[207px]"],
  ["CVD", "w-[158px]"],
  ["CMAPscan", "w-[300px]"],
];

function TabRow() {
  return (
    <nav className="flex h-[41px] items-center pr-6 pl-[28px] font-['DejaVu_Sans',sans-serif] text-[40px] leading-[40px] text-[#00d0f0]">
      {tabs.map(([name, cls]) => (
        <button type="button" key={name} className={`${cls} text-left whitespace-nowrap`}>
          {name}
        </button>
      ))}
      <span className="ml-auto self-end font-['Liberation_Sans',sans-serif] text-[30px] leading-[26px] text-white">
        20.1
      </span>
    </nav>
  );
}

function KeyPanel({
  keys,
  frame,
  children,
}: {
  keys: [string, string];
  frame: string;
  children: React.ReactNode;
}) {
  return (
    <div className={`relative flex flex-1 flex-col border-x-[5px] border-y-[6px] bg-[#e2e2e2] ${frame}`}>
      {children}
      <span className="absolute top-0 left-[2px] text-[24px] leading-[28px]">{keys[0]}</span>
      <span className="absolute bottom-0 left-[2px] text-[24px] leading-[28px]">{keys[1]}</span>
    </div>
  );
}

function SoftKeys() {
  const full = "flex flex-1 items-center justify-center whitespace-pre";
  return (
    <footer className="flex h-[121px] border-t-2 border-[#e8ecff] bg-[#8fa8e8] font-['Liberation_Sans',sans-serif] text-[46px] leading-[44px] text-black">
      <div className="flex w-[70px] shrink-0 flex-col gap-1">
        <button type="button" aria-label="Scroll up" className="flex flex-1 items-center justify-center bg-[#e8e8e8]">
          <svg viewBox="0 0 38 38" className="size-[38px]" fill="#858585">
            <path d="M19 0L38 38H0Z" />
          </svg>
        </button>
        <button type="button" aria-label="Scroll down" className="flex flex-1 items-center justify-center bg-[#e8e8e8]">
          <svg viewBox="0 0 38 38" className="size-[38px]" fill="#858585">
            <path d="M0 0H38L19 38Z" />
          </svg>
        </button>
      </div>
      <div className="flex flex-1 gap-[2px]">
        <KeyPanel keys={["F1", "F2"]} frame="border-[#e8101c]">
          <button type="button" className={full}>
            Setup
          </button>
        </KeyPanel>
        <KeyPanel keys={["F3", "F4"]} frame="border-[#f8f020]">
          <button type="button" className={full}>
            Reanalyze
          </button>
        </KeyPanel>
        <KeyPanel keys={["F5", "F6"]} frame="border-[#7c007c]">
          <div className="flex flex-1 flex-col items-center justify-between">
            <button type="button" aria-label="Increase duration">
              <svg viewBox="0 0 20 10" className="block h-[10px] w-5" fill="#7c007c">
                <path d="M10 0L20 10H0Z" />
              </svg>
            </button>
            <span className="whitespace-pre">Dur:{"   "}1 ms</span>
            <button type="button" aria-label="Decrease duration">
              <svg viewBox="0 0 20 10" className="block h-[10px] w-5" fill="#7c007c">
                <path d="M0 0H20L10 10Z" />
              </svg>
            </button>
          </div>
        </KeyPanel>
        <KeyPanel keys={["F7", "F8"]} frame="border-[#00e020]">
          <button type="button" className="flex-1 border-b-2 border-[#00c040]">
            Stim: Non-Rec
          </button>
          <button type="button" className="flex-1 border-t-2 border-[#00c040]">
            Rate: 0.5 Hz
          </button>
        </KeyPanel>
        <KeyPanel keys={["F9", "F10"]} frame="border-white">
          <button type="button" className={full}>
            Min H-Lat: 20.0 ms
          </button>
        </KeyPanel>
        <KeyPanel keys={["F11", "F12"]} frame="border-[#00e0ff]">
          <button type="button" className="flex-1">
            Markers:
            <br />
            Latencies
          </button>
        </KeyPanel>
      </div>
    </footer>
  );
}

export default function App() {
  return (
    <div className="flex min-h-screen flex-col bg-white pt-[25px] pr-[29px] pb-[28px] pl-[26px]">
      <main className="relative flex flex-1 flex-col border-x-2 border-t-[3px] border-b-[4px] border-x-[#4d86d8] border-t-[#3b5488] border-b-[#104080] bg-[#0000a8]">
        <MenuBar />
        <ToolBar />
        <div className="h-[4px] bg-[#001070]" />
        <StimBar />
        <div className="grid flex-1 grid-cols-2 gap-[30px] pr-[14px] pl-[28px]">
          <TracePlot />
          <div className="flex flex-col">
            <TraceReadout />
            <WaveTable />
            <div className="ml-[6px] flex">
              <AmpChart
                title="mV  M-Amp"
                axisX={126}
                unit={36.1}
                labels={[0, 2, 4, 6]}
                minor={[]}
                mark="x"
                points={[
                  [6.8, 0.78], [7.6, 1.91], [9.8, 2.13], [10.7, 2.05], [13.7, 2.33], [16.6, 2.13],
                  [20.9, 2.24], [25.1, 4.1], [27.8, 5.47], [31.1, 5.47], [34.4, 5.47],
                ]}
              />
              <AmpChart
                title="mV  H-Amp"
                axisX={145}
                unit={73.3}
                labels={[0, 1, 2, 3]}
                minor={[0.5, 1.5, 2.5]}
                mark="o"
                points={[
                  [9.8, 1.73], [10.9, 2.62], [13.9, 2.74], [16.7, 2.16], [21, 1.05],
                  [25.2, 0], [27.9, 0], [31.2, 0], [34.5, 0],
                ]}
              />
            </div>
            <OverlayPlot />
          </div>
        </div>
        <TabRow />
        <SoftKeys />
      </main>
    </div>
  );
}
